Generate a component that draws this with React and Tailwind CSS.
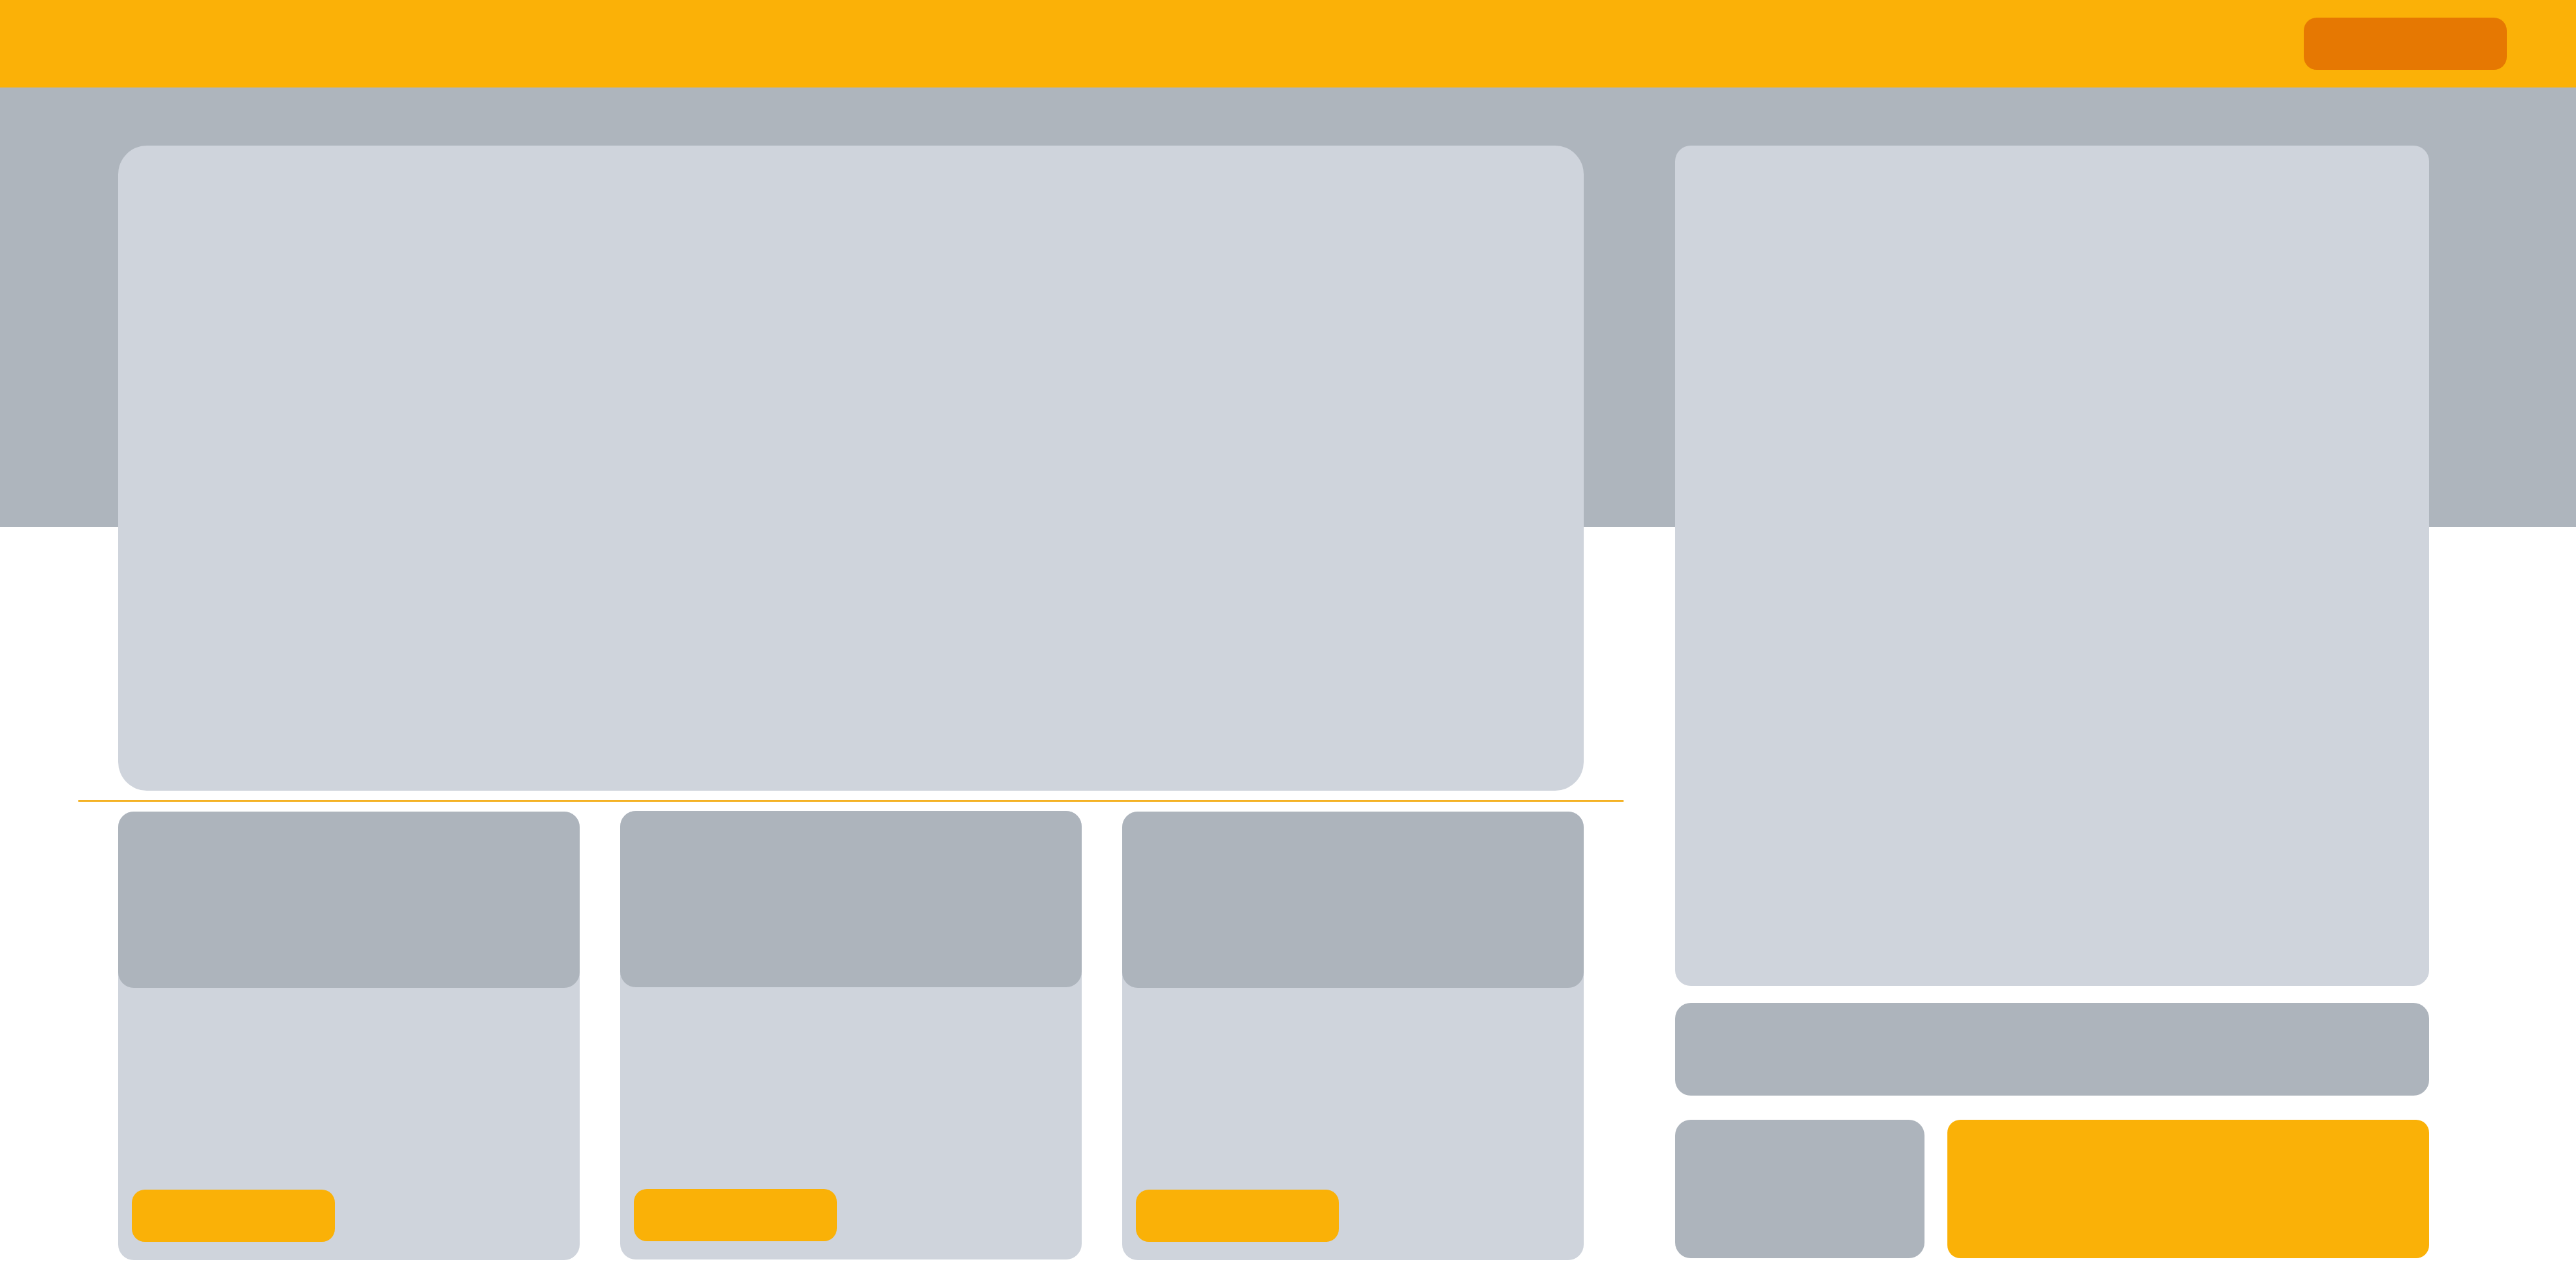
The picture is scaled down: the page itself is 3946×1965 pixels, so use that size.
export default function App() {
  const cards = [0, 1, 2];

  return (
    <div className="min-h-screen w-full bg-white">
      {/* Top bar */}
      <header className="flex h-[134px] items-center justify-end bg-[#fbb107] pr-[106px]">
        <div className="h-[80px] w-[311px] rounded-[20px] bg-[#e67802]" />
      </header>

      {/* Body with grey hero band behind */}
      <main className="flex bg-[linear-gradient(to_bottom,#aeb5bd_673px,#ffffff_673px)] pb-[35px] pl-[120px] pt-[89px]">
        {/* Left column */}
        <section className="flex w-[2367px] flex-col">
          <div className="mx-[61px] h-[988px] rounded-[44px] bg-[#cfd4dc]" />

          <div className="mt-[14px] h-[3px] bg-[#f4b225]" />

          <div className="mt-[15px] grid grid-cols-3 gap-[62px] px-[61px]">
            {cards.map((i) => (
              <div
                key={i}
                className={`flex h-[687px] flex-col rounded-[24px] bg-[#cfd4dc] ${i === 1 ? "-mt-px" : ""}`}
              >
                <div className="h-[270px] rounded-[24px] bg-[#adb4bc]" />
                <div className="mb-[28px] ml-[21px] mt-auto h-[80px] w-[311px] rounded-[20px] bg-[#fab107]" />
              </div>
            ))}
          </div>
        </section>

        {/* Sidebar */}
        <aside className="ml-[79px] flex w-[1155px] flex-col">
          <div className="h-[1287px] rounded-[24px] bg-[#cfd4dc]" />
          <div className="mt-[26px] h-[142px] rounded-[24px] bg-[#adb4bc]" />
          <div className="mt-[37px] flex h-[212px] gap-[35px]">
            <div className="w-[382px] rounded-[24px] bg-[#adb4bc]" />
            <div className="flex-1 rounded-[20px] bg-[#fab107]" />
          </div>
        </aside>
      </main>
    </div>
  );
}
